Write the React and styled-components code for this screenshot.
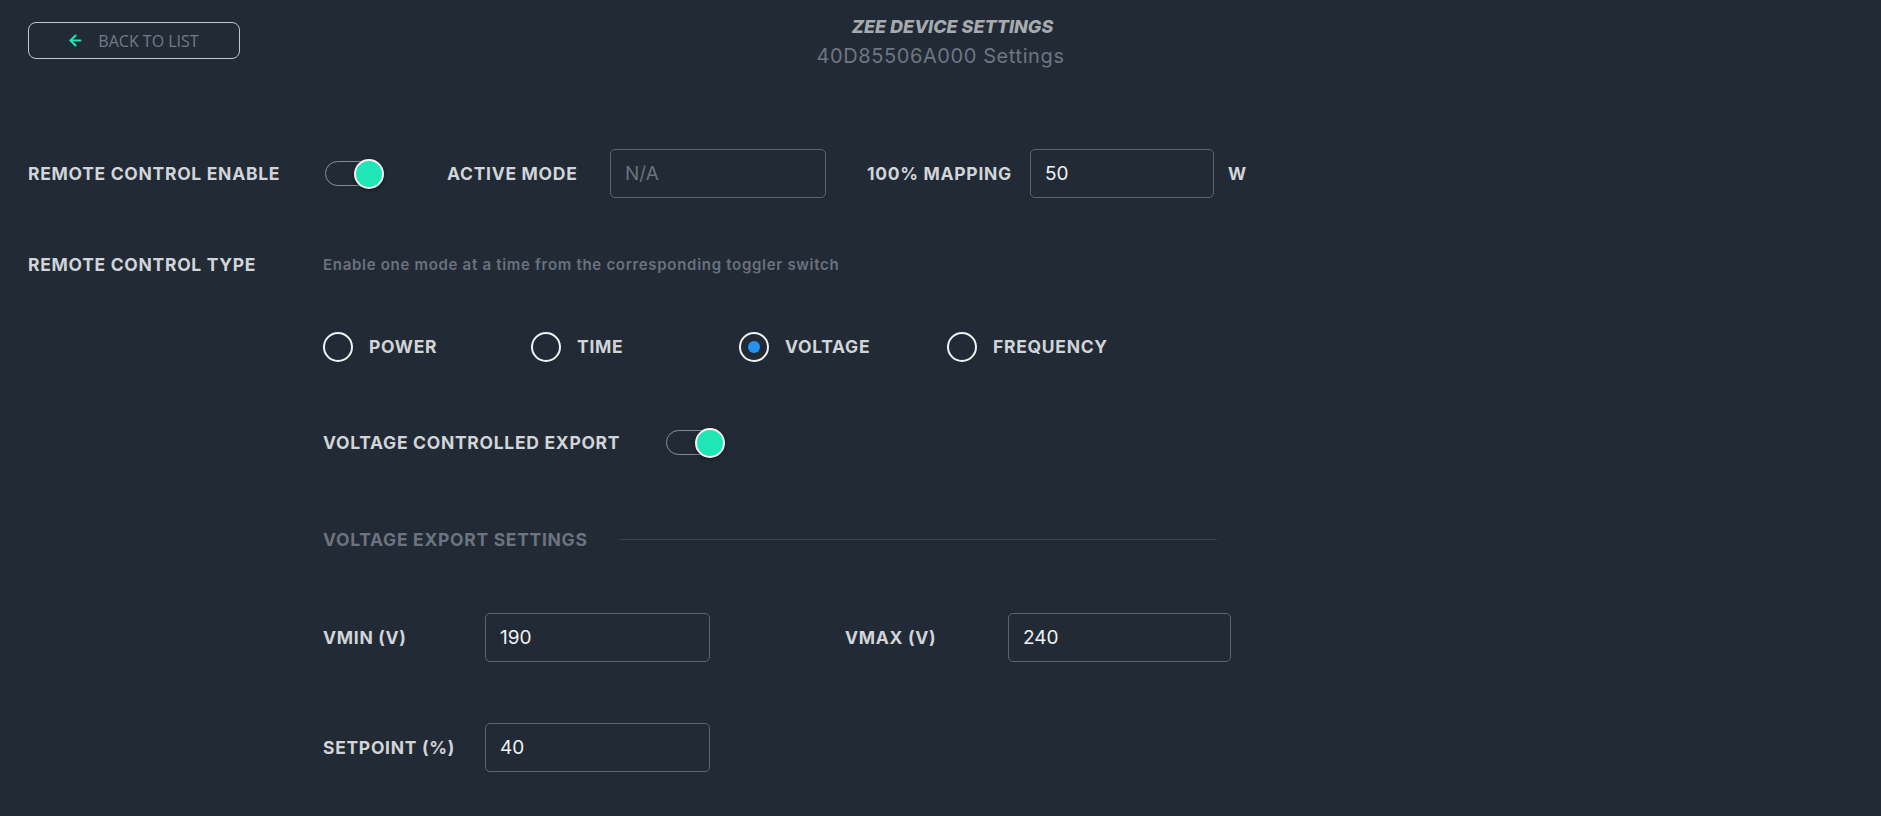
import React, { useState } from "react";
import styled, { createGlobalStyle } from "styled-components";
import { ArrowLeft } from "lucide-react";

const MODES = ["POWER", "TIME", "VOLTAGE", "FREQUENCY"];

export default function App() {
  const [remoteOn, setRemoteOn] = useState(true);
  const [exportOn, setExportOn] = useState(true);
  const [mode, setMode] = useState("VOLTAGE");

  return (
    <Page>
      <GlobalStyle />

      <Header>
        <BackButton>
          <ArrowLeft size={17} strokeWidth={3} color="#1fe3b2" />
          BACK TO LIST
        </BackButton>
        <TitleBlock>
          <Title>ZEE DEVICE SETTINGS</Title>
          <Subtitle>40D85506A000 Settings</Subtitle>
        </TitleBlock>
      </Header>

      {/* Row 1 */}
      <Row $mt={81}>
        <RowLabel $w={297}>REMOTE CONTROL ENABLE</RowLabel>
        <Toggle $on={remoteOn} onClick={() => setRemoteOn(!remoteOn)}>
          <Knob $on={remoteOn} />
        </Toggle>
        <FieldLabel $ml={66} $w={163}>ACTIVE MODE</FieldLabel>
        <Input $w={216} placeholder="N/A" readOnly />
        <FieldLabel $ml={41} $w={163}>100% MAPPING</FieldLabel>
        <Input $w={184} defaultValue="50" />
        <Unit>W</Unit>
      </Row>

      {/* Row 2 */}
      <Row $mt={42}>
        <RowLabel $w={295}>REMOTE CONTROL TYPE</RowLabel>
        <Hint>Enable one mode at a time from the corresponding toggler switch</Hint>
      </Row>

      <Row $mt={33} $indent={295}>
        {MODES.map((m) => (
          <RadioItem key={m} onClick={() => setMode(m)}>
            <Circle>{mode === m && <Dot />}</Circle>
            <RadioText>{m}</RadioText>
          </RadioItem>
        ))}
      </Row>

      <Row $mt={47} $indent={295}>
        <RowLabel $w={343}>VOLTAGE CONTROLLED EXPORT</RowLabel>
        <Toggle $on={exportOn} onClick={() => setExportOn(!exportOn)}>
          <Knob $on={exportOn} />
        </Toggle>
      </Row>

      <Row $mt={48} $indent={295}>
        <Section>
          <SectionTitle>VOLTAGE EXPORT SETTINGS</SectionTitle>
          <Rule />
        </Section>
      </Row>

      <Row $mt={49} $indent={295}>
        <RowLabel $w={162}>VMIN (V)</RowLabel>
        <Input $w={225} defaultValue="190" />
        <FieldLabel $ml={135} $w={163}>VMAX (V)</FieldLabel>
        <Input $w={223} defaultValue="240" />
      </Row>

      <Row $mt={61} $indent={295}>
        <RowLabel $w={162}>SETPOINT (%)</RowLabel>
        <Input $w={225} defaultValue="40" />
      </Row>
    </Page>
  );
}

const GlobalStyle = createGlobalStyle`
  body {
    margin: 0;
    background: #222b35;
    font-family: Inter, "Noto Sans", sans-serif;
  }
`;

const Page = styled.div`
  min-height: 100vh;
  padding: 0 28px;
  box-sizing: border-box;
`;

const Header = styled.div`
  display: grid;
  grid-template-columns: 1fr auto 1fr;
  align-items: start;
  padding-top: 16px;
`;

const BackButton = styled.button`
  margin-top: 6px;
  width: 212px;
  height: 37px;
  display: flex;
  align-items: center;
  justify-content: center;
  gap: 14px;
  padding-right: 8px;
  background: transparent;
  border: 1px solid #c3c6ca;
  border-radius: 8px;
  color: #737a87;
  font-family: "Open Sans", sans-serif;
  font-size: 16px;
  cursor: pointer;
`;

const TitleBlock = styled.div`
  text-align: center;
`;

const Title = styled.div`
  padding-left: 24px;
  font-style: italic;
  font-weight: 800;
  font-size: 18px;
  line-height: 22px;
  color: #a7aaae;
`;

const Subtitle = styled.div`
  margin-top: 6px;
  font-size: 20px;
  letter-spacing: 0.6px;
  line-height: 24px;
  color: #6f7581;
`;

const Row = styled.div`
  display: flex;
  align-items: center;
  min-height: 49px;
  margin-top: ${(p) => p.$mt || 0}px;
  padding-left: ${(p) => p.$indent || 0}px;
`;

const RowLabel = styled.div`
  width: ${(p) => p.$w}px;
  flex-shrink: 0;
  font-weight: 700;
  font-size: 17.5px;
  letter-spacing: 0.7px;
  color: #d1d4d8;
`;

const FieldLabel = styled.div`
  margin-left: ${(p) => p.$ml}px;
  width: ${(p) => p.$w}px;
  flex-shrink: 0;
  font-weight: 700;
  font-size: 17.5px;
  letter-spacing: 0.7px;
  color: #d1d4d8;
`;

const Input = styled.input`
  width: ${(p) => p.$w}px;
  height: 49px;
  box-sizing: border-box;
  padding: 0 14px;
  background: transparent;
  border: 1px solid #5d646e;
  border-radius: 5px;
  color: #f1f2f3;
  font-family: inherit;
  font-size: 19px;
  outline: none;

  &::placeholder {
    color: #6b717d;
  }
`;

const Unit = styled.div`
  margin-left: 14px;
  font-weight: 700;
  font-size: 17.5px;
  color: #d1d4d8;
`;

const Toggle = styled.div`
  position: relative;
  width: 56px;
  height: 25px;
  box-sizing: border-box;
  border: 1.5px solid #878d95;
  border-radius: 13px;
  cursor: pointer;
`;

const Knob = styled.span`
  position: absolute;
  top: -3px;
  left: ${(p) => (p.$on ? "28px" : "-3px")};
  width: 30px;
  height: 30px;
  box-sizing: border-box;
  border-radius: 50%;
  border: 2.5px solid #f3f3f3;
  background: ${(p) => (p.$on ? "#1fe6b5" : "#9aa0a8")};
  box-shadow: 0 1px 4px rgba(0, 0, 0, 0.5);
`;

const Hint = styled.div`
  font-size: 15px;
  font-weight: 600;
  letter-spacing: 0.7px;
  color: #6b717d;
`;

const RadioItem = styled.div`
  width: 208px;
  display: flex;
  align-items: center;
  gap: 16px;
  cursor: pointer;
`;

const Circle = styled.span`
  width: 30px;
  height: 30px;
  box-sizing: border-box;
  border: 2.5px solid #f2f2f2;
  border-radius: 50%;
  display: flex;
  align-items: center;
  justify-content: center;
`;

const Dot = styled.span`
  width: 12px;
  height: 12px;
  border-radius: 50%;
  background: #2293f0;
`;

const RadioText = styled.span`
  font-weight: 700;
  font-size: 17.5px;
  letter-spacing: 0.7px;
  color: #d1d4d8;
`;

const Section = styled.div`
  width: 894px;
  display: flex;
  align-items: center;
  gap: 31px;
`;

const SectionTitle = styled.div`
  font-weight: 700;
  font-size: 17.5px;
  letter-spacing: 0.7px;
  color: #6d7380;
  white-space: nowrap;
`;

const Rule = styled.div`
  flex: 1;
  height: 1px;
  background: #3a424c;
`;
